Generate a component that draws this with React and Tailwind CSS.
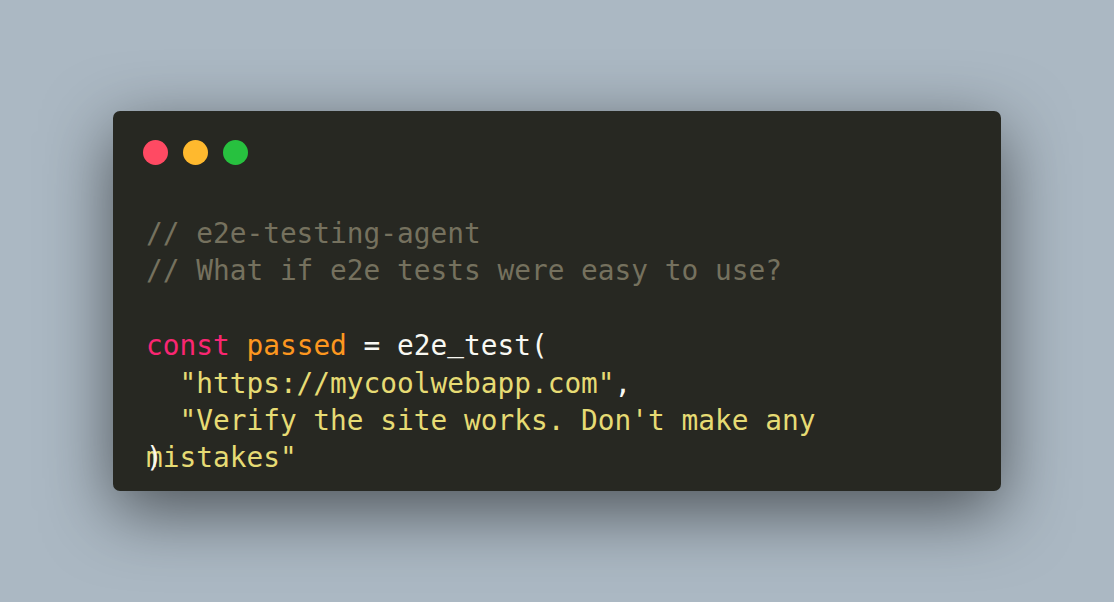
import React from "react";

export default function App() {
  const mono = { fontFamily: '"DejaVu Sans Mono", "Liberation Mono", monospace' };
  const libMono = { fontFamily: '"Liberation Mono", monospace' };
  return (
    <div className="w-[1114px] h-[602px] bg-[#abb8c3] flex items-center justify-center overflow-hidden">
      <div className="w-[888px] h-[380px] bg-[#272822] rounded-[7px] shadow-[0_20px_68px_rgba(0,0,0,0.55)] flex flex-col pl-[30px] pt-[29px]">
        <div className="flex gap-[15px] h-[25px]">
          <span className="w-[25px] h-[25px] rounded-full bg-[#ff4a63]" />
          <span className="w-[25px] h-[25px] rounded-full bg-[#ffb92e]" />
          <span className="w-[25px] h-[25px] rounded-full bg-[#27c13f]" />
        </div>
        <div
          className="mt-[50px] pl-[3px] text-[27.8px] leading-[37.4px] whitespace-pre text-[#f8f8f2]"
          style={mono}
        >
          <div className="h-[37.4px] text-[#75715e]">// e2e-testing-agent</div>
          <div className="h-[37.4px] text-[#75715e]">// What if e2e tests were easy to use?</div>
          <div className="h-[37.4px]">{" "}</div>
          <div className="h-[37.4px]">
            <span className="text-[#f92672]">const</span>{" "}
            <span className="text-[#fd971f]">passed</span>
            <span> = e2e</span>
            <span style={libMono}>_</span>
            <span>test(</span>
          </div>
          <div className="h-[37.4px] text-[#e6db74]">{'  "https://mycoolwebapp.com"'}<span className="text-[#f8f8f2]">,</span></div>
          <div className="h-[37.4px] text-[#e6db74]">{'  "Verify the site works. Don\'t make any'}</div>
          <div className="relative h-[37.4px]">
            <span className="text-[#e6db74]">{'mistakes"'}</span>
            <span className="absolute left-0 top-0 text-[#f8f8f2]">)</span>
          </div>
        </div>
      </div>
    </div>
  );
}
